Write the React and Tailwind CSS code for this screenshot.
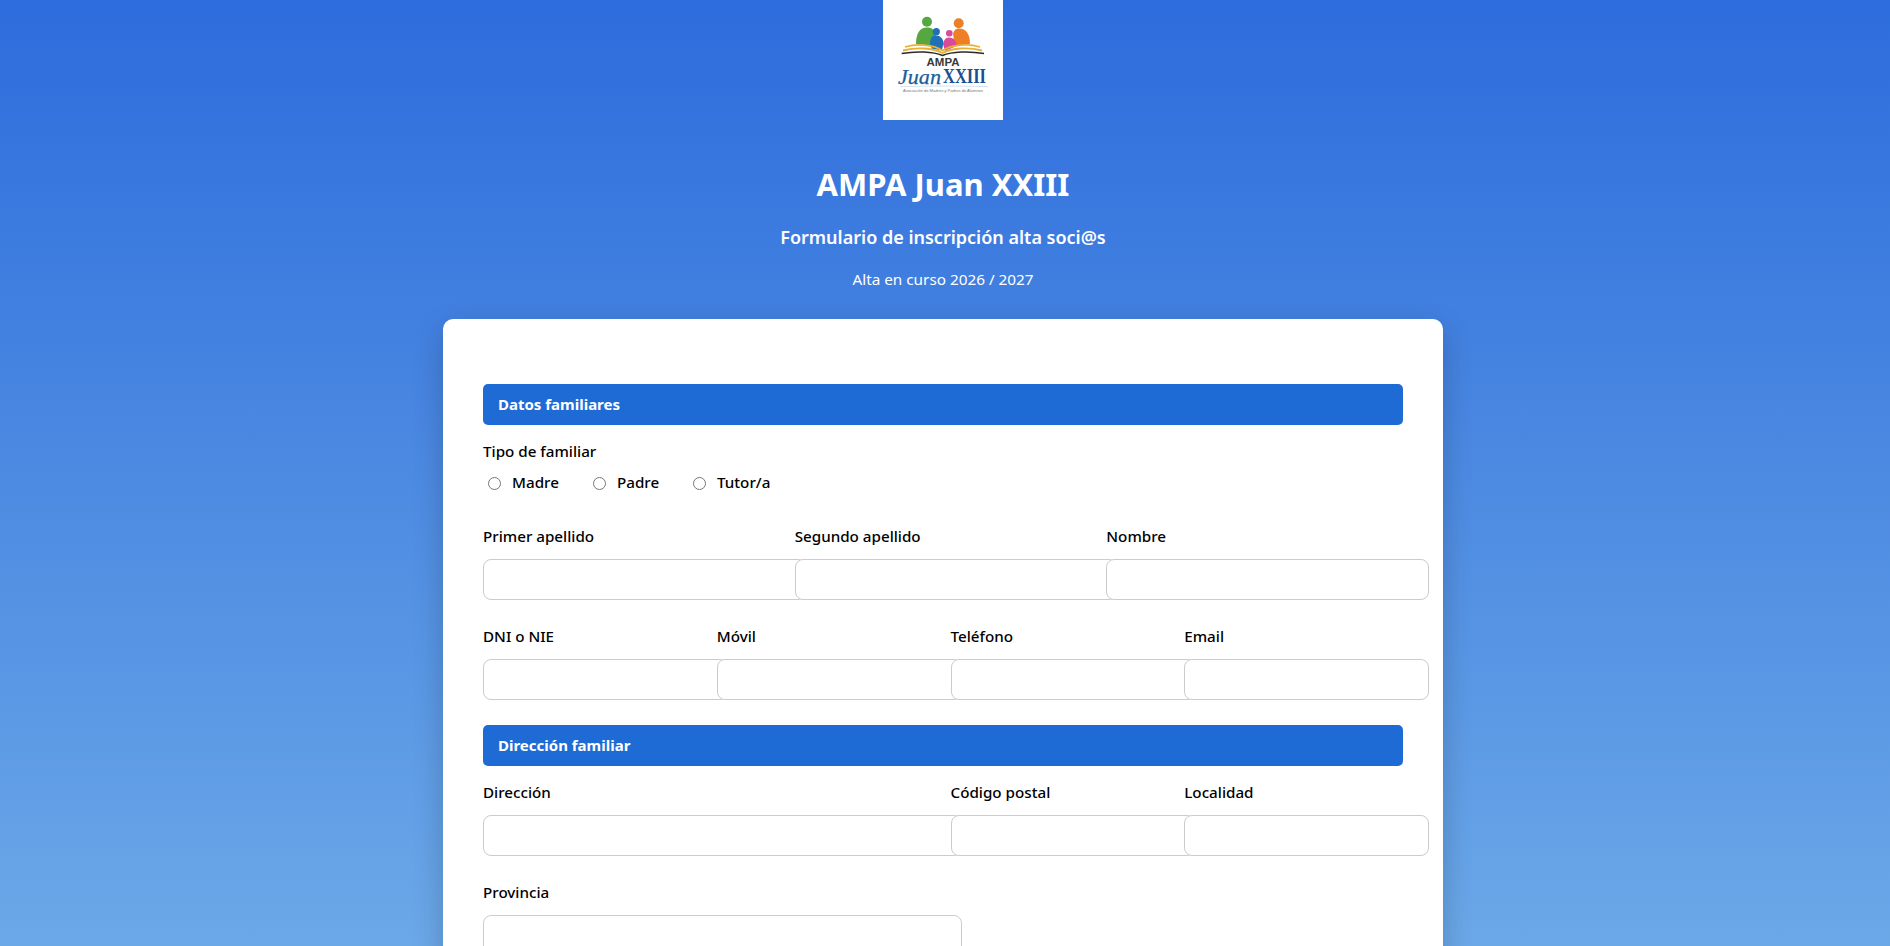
import React from 'react';

const FONT = "font-['Noto_Sans','Open_Sans',sans-serif]";
const LABEL_CLASS = 'block text-[15.2px] leading-[22px] font-medium text-black';
const INPUT_CLASS = 'block h-[41px] box-border w-[calc(100%+11px)] rounded-lg border border-[#cccccc] bg-white';

const Logo = () => (
  <div className="w-[120px] h-[120px] bg-white shrink-0">
    <svg viewBox="0 0 120 120" width="120" height="120">
      <circle cx="44" cy="21.7" r="5" fill="#55a83f" />
      <path d="M33 44C33 33 37 27.500 44 27.500C49 27.500 52 30 53 35L50 46Z" fill="#55a83f" />
      <circle cx="75.700" cy="23.300" r="5" fill="#ee7f27" />
      <path d="M70 34C71 30 73 28.500 76 28.500C83 28.500 87 34 87 44L72 46Z" fill="#ee7f27" />
      <circle cx="53.300" cy="31.700" r="3.600" fill="#1f70b9" />
      <path d="M47 44C47 38 49 35.500 53 35.500C57 35.500 60 38 60.500 43L59 50L49 49Z" fill="#1f70b9" />
      <circle cx="66.300" cy="33.300" r="3.300" fill="#d94a9b" />
      <path d="M60 44C61 39.500 63 37.500 66 37.500C71 37.500 73.500 41 73.700 46L62 51Z" fill="#d94a9b" />
      <path d="M22 47C34 43.500 50 44.500 59.500 50.500C69 44.500 85 43.500 97 47" fill="none" stroke="#e8b136" strokeWidth="1.800" />
      <path d="M20 50.500C34 47 50 48 59.500 53C69 48 85 47 99 50.500" fill="none" stroke="#e8b136" strokeWidth="1.900" />
      <path d="M18.700 53.500C33 51 50 51.500 59.500 55.500C69 51.500 86 51 101 53.500" fill="none" stroke="#2a2a2a" strokeWidth="1.600" />
      <text x="60" y="65.500" textAnchor="middle" fontSize="10" fontWeight="700" fill="#3a3a3a" fontFamily="Liberation Sans, sans-serif" textLength="33" lengthAdjust="spacingAndGlyphs">AMPA</text>
      <text x="15" y="84" fontSize="20" fontStyle="italic" fill="#1c5d99" stroke="#1c5d99" strokeWidth="0.250" fontFamily="Liberation Serif, serif" textLength="43" lengthAdjust="spacingAndGlyphs">Juan</text>
      <text x="60" y="83" fontSize="20" fontWeight="700" fill="#1c4f8f" fontFamily="Liberation Serif, serif" textLength="43" lengthAdjust="spacingAndGlyphs">XXIII</text>
      <path d="M17 86.700C45 85.800 75 85.800 105 86.700" fill="none" stroke="#b9cbe6" strokeWidth="0.600" />
      <text x="60" y="92.300" textAnchor="middle" fontSize="3.500" fill="#777777" fontFamily="Liberation Sans, sans-serif" textLength="80" lengthAdjust="spacingAndGlyphs">Asociación de Madres y Padres de Alumnos</text>
    </svg>
  </div>
);

const Field = ({ label, className }) => (
  <div className={className}>
    <label className={LABEL_CLASS}>{label}</label>
    <input type="text" className={`${INPUT_CLASS} mt-[12px]`} />
  </div>
);

const SectionBar = ({ title }) => (
  <div className="w-[920px] h-[41px] rounded-[5px] bg-[#1f6bd6] pl-[15px] flex items-center text-[15px] font-bold text-white">
    {title}
  </div>
);

const Radio = ({ label }) => (
  <label className="flex items-center text-[15.2px] font-medium text-black">
    <input type="radio" name="tipo" className="w-[13px] h-[13px] ml-[5px] mr-[11px] mt-[2px]" />
    {label}
  </label>
);

export default function App() {
  return (
    <div className={`${FONT} h-[946px] overflow-hidden bg-[linear-gradient(180deg,#2d6cdc_0%,#6ba8e8_100%)]`}>
      <div className="w-[1886px] flex flex-col items-center">
        <Logo />
        <h1 className="mt-[44px] text-[31px] leading-[40px] font-bold text-white">AMPA Juan XXIII</h1>
        <h2 className="mt-[20px] text-[18px] leading-[26px] font-semibold text-white">Formulario de inscripción alta soci@s</h2>
        <p className="mt-[18px] text-[15.3px] leading-[22px] text-white">Alta en curso 2026 / 2027</p>

        <div className="mt-[29px] w-[1000px] rounded-[10px] bg-white px-10 pt-[65px] pb-10 shadow-[0_10px_30px_rgba(0,0,0,0.2)]">
          <SectionBar title="Datos familiares" />

          <div className="mt-[15px]">
            <div className={LABEL_CLASS}>Tipo de familiar</div>
            <div className="mt-[9px] flex h-[22px]">
              <div className="w-[105px]"><Radio label="Madre" /></div>
              <div className="w-[100px]"><Radio label="Padre" /></div>
              <Radio label="Tutor/a" />
            </div>
          </div>

          <div className="mt-[32px] grid grid-cols-[repeat(3,311.67px)]">
            <Field label="Primer apellido" />
            <Field label="Segundo apellido" />
            <Field label="Nombre" />
          </div>

          <div className="mt-[25px] grid grid-cols-[repeat(4,233.75px)]">
            <Field label="DNI o NIE" />
            <Field label="Móvil" />
            <Field label="Teléfono" />
            <Field label="Email" />
          </div>

          <div className="mt-[25px]">
            <SectionBar title="Dirección familiar" />
          </div>

          <div className="mt-[15px] grid grid-cols-[repeat(4,233.75px)]">
            <Field label="Dirección" className="col-span-2" />
            <Field label="Código postal" />
            <Field label="Localidad" />
          </div>

          <div className="mt-[25px] grid grid-cols-[repeat(4,233.75px)]">
            <Field label="Provincia" className="col-span-2" />
          </div>
        </div>
      </div>
    </div>
  );
}
